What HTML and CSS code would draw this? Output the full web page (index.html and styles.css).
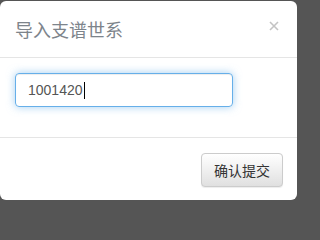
FILE: index.html
```html
<!DOCTYPE html>
<html>
<head>
<meta charset="utf-8">
<link rel="stylesheet" href="styles.css">
</head>
<body>
<div class="modal">
  <div class="modal-header">
    <span class="close"><svg width="10" height="10" viewBox="0 0 10 10"><path d="M1 1L9 9M9 1L1 9" stroke="#c4c4c4" stroke-width="1.6" fill="none"/></svg></span>
    <h4 class="modal-title">导入支谱世系</h4>
  </div>
  <div class="modal-body">
    <div class="form-group">
      <div class="form-control"><span>1001420</span><span class="caret"></span></div>
    </div>
  </div>
  <div class="modal-footer">
    <button class="btn">确认提交</button>
  </div>
</div>
</body>
</html>
```
FILE: styles.css
```css
html, body {
  margin: 0;
  padding: 0;
  background: #555;
}
body {
  padding-top: 1px;
  font-family: "Liberation Sans", "Noto Sans CJK SC", sans-serif;
  font-size: 14px;
  line-height: 1.42857;
  color: #333;
}
.modal {
  width: 297px;
  background: #fff;
  border-radius: 6px;
  overflow: hidden;
}
.modal-header {
  padding: 15px;
  border-bottom: 1px solid #e5e5e5;
  height: 26px;
}
.modal-title {
  margin: 0;
  font-family: "Noto Sans CJK SC", sans-serif;
  font-weight: normal;
  font-size: 18px;
  line-height: 26px;
  color: #7d848b;
}
.close {
  float: right;
  margin-top: 5px;
  margin-right: 3px;
  width: 10px;
  height: 10px;
  display: flex;
}
.modal-body {
  padding: 15px;
}
.form-group {
  margin-bottom: 15px;
}
.form-control {
  width: 218px;
  height: 34px;
  box-sizing: border-box;
  padding: 6px 12px;
  border: 1px solid #66afe9;
  border-radius: 4px;
  box-shadow: inset 0 1px 1px rgba(0,0,0,.075), 0 0 8px rgba(102,175,233,.6);
  color: #555;
  font-size: 14px;
  line-height: 20px;
  display: flex;
  align-items: center;
}
.caret {
  display: inline-block;
  width: 1px;
  height: 17px;
  background: #000;
  margin-left: 1px;
}
.modal-footer {
  padding: 15px 15px 13px;
  border-top: 1px solid #e5e5e5;
  display: flex;
  justify-content: flex-end;
}
.btn {
  height: 34px;
  padding: 6px 12px;
  margin-right: -1px;
  font-family: "Noto Sans CJK SC", sans-serif;
  font-size: 14px;
  line-height: 20px;
  color: #333;
  background-image: linear-gradient(to bottom, #fff 0, #e0e0e0 100%);
  border: 1px solid #ccc;
  border-radius: 4px;
  box-shadow: inset 0 1px 0 rgba(255,255,255,.15), 0 1px 1px rgba(0,0,0,.075);
}
```
